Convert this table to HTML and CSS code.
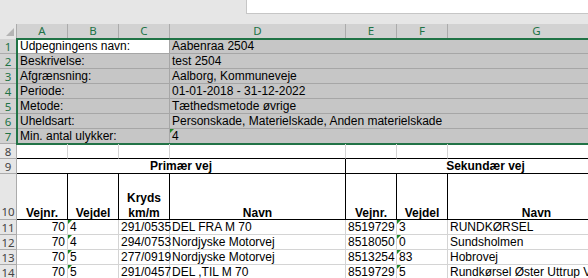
FILE: index.html
```html
<!DOCTYPE html>
<html lang="da">
<head>
<meta charset="utf-8">
<title>Udpegning</title>
<link rel="stylesheet" href="styles.css">
</head>
<body>
<div class="app">
  <div class="topbar">
    <div class="namebox"></div>
    <div class="formula"></div>
  </div>

  <!-- column headers -->
  <div class="grid heads">
    <div class="corner"></div>
    <div class="ch sel">A</div>
    <div class="ch sel">B</div>
    <div class="ch sel">C</div>
    <div class="ch sel">D</div>
    <div class="ch sel">E</div>
    <div class="ch sel">F</div>
    <div class="ch sel">G</div>
  </div>

  <!-- metadata block, currently selected -->
  <div class="grid meta">
    <div class="rh sel">1</div>
    <div class="c lbl active">Udpegningens navn:</div>
    <div class="c val">Aabenraa 2504</div>

    <div class="rh sel">2</div>
    <div class="c lbl">Beskrivelse:</div>
    <div class="c val">test 2504</div>

    <div class="rh sel">3</div>
    <div class="c lbl">Afgrænsning:</div>
    <div class="c val">Aalborg, Kommuneveje</div>

    <div class="rh sel">4</div>
    <div class="c lbl">Periode:</div>
    <div class="c val">01-01-2018 - 31-12-2022</div>

    <div class="rh sel">5</div>
    <div class="c lbl">Metode:</div>
    <div class="c val">Tæthedsmetode øvrige</div>

    <div class="rh sel">6</div>
    <div class="c lbl">Uheldsart:</div>
    <div class="c val">Personskade, Materielskade, Anden materielskade</div>

    <div class="rh sel">7</div>
    <div class="c lbl">Min. antal ulykker:</div>
    <div class="c val flag">4</div>
  </div>

  <!-- result table -->
  <div class="grid table">
    <div class="rh">8</div>
    <div class="c r8"></div><div class="c r8"></div><div class="c r8"></div><div class="c r8"></div>
    <div class="c r8"></div><div class="c r8"></div><div class="c r8"></div>

    <div class="rh">9</div>
    <div class="c grp prim">Primær vej</div>
    <div class="c grp sek">Sekundær vej</div>

    <div class="rh tall">10</div>
    <div class="c hd"><span class="hd-t">Vejnr.</span></div>
    <div class="c hd"><span class="hd-t">Vejdel</span></div>
    <div class="c hd"><span class="hd-t">Kryds<br>km/m</span></div>
    <div class="c hd"><span class="hd-t">Navn</span></div>
    <div class="c hd"><span class="hd-t">Vejnr.</span></div>
    <div class="c hd"><span class="hd-t">Vejdel</span></div>
    <div class="c hd"><span class="hd-t">Navn</span></div>

    <div class="rh">11</div>
    <div class="c num">70</div><div class="c flag">4</div><div class="c">291/0535</div><div class="c">DEL FRA M 70</div>
    <div class="c num">8519729</div><div class="c flag">3</div><div class="c">RUNDKØRSEL</div>

    <div class="rh">12</div>
    <div class="c num">70</div><div class="c flag">4</div><div class="c">294/0753</div><div class="c">Nordjyske Motorvej</div>
    <div class="c num">8518050</div><div class="c flag">0</div><div class="c">Sundsholmen</div>

    <div class="rh">13</div>
    <div class="c num">70</div><div class="c flag">5</div><div class="c">277/0919</div><div class="c">Nordjyske Motorvej</div>
    <div class="c num">8513254</div><div class="c flag">83</div><div class="c">Hobrovej</div>

    <div class="rh">14</div>
    <div class="c num">70</div><div class="c flag">5</div><div class="c">291/0457</div><div class="c">DEL ,TIL M 70</div>
    <div class="c num">8519729</div><div class="c flag">5</div><div class="c">Rundkørsel Øster Uttrup Vej</div>
  </div>
</div>
</body>
</html>
```

FILE: styles.css
```css
html, body {
  margin: 0;
  padding: 0;
  background: #ffffff;
  overflow: hidden;
}

.app {
  width: 640px;
  height: 278px;
  overflow: hidden;
  font-family: "Liberation Sans", Arial, sans-serif;
  font-size: 12px;
  color: #000;
}

/* strip above the grid */
.topbar {
  height: 24px;
  background: #e6e6e6;
  display: flex;
  align-items: flex-start;
}
.namebox {
  width: 246px;
}
.formula {
  flex: 1;
  height: 13px;
  background: #ffffff;
  border-left: 1px solid #c6c6c6;
  border-bottom: 1px solid #c6c6c6;
}

/* worksheet columns: row header, A..G */
.grid {
  display: grid;
  grid-template-columns: 17px 51px 51px 51px 176px 51px 51px 178px;
  grid-auto-rows: 15px;
  background: #ffffff;
}
.heads {
  grid-template-rows: 15px;
}
.meta {
  position: relative;
}
/* selection outline around A1:G7 */
.meta::after {
  content: "";
  position: absolute;
  left: 16px;
  top: -1px;
  right: -4px;
  bottom: -1px;
  border: 2px solid #217346;
  pointer-events: none;
}
.table {
  grid-template-rows: 15px 15px 46px;
}

.corner {
  position: relative;
  background: #e6e6e6;
  border-right: 1px solid #ababab;
}
.corner::after {
  content: "";
  position: absolute;
  right: 2px;
  bottom: 3px;
  border-left: 8px solid transparent;
  border-bottom: 8px solid #b4b4b4;
}

.ch {
  box-sizing: border-box;
  background: #e6e6e6;
  border-right: 1px solid #ababab;
  font-family: "Noto Sans", "Liberation Sans", sans-serif;
  font-size: 11.5px;
  line-height: 14px;
  text-align: center;
  color: #444;
}
.ch.sel {
  background: #d2d2d2;
  color: #217346;
}

.rh {
  box-sizing: border-box;
  background: #e6e6e6;
  border-bottom: 1px solid #ababab;
  border-right: 1px solid #ababab;
  font-family: "Noto Sans", "Liberation Sans", sans-serif;
  font-size: 11.5px;
  line-height: 15px;
  color: #444;
  text-align: center;
}
.rh.sel {
  background: #d2d2d2;
  color: #217346;
}
.rh.tall {
  display: flex;
  align-items: flex-end;
  justify-content: center;
}

/* cells */
.c {
  position: relative;
  box-sizing: border-box;
  border-right: 1px solid #d4d4d4;
  border-bottom: 1px solid #d4d4d4;
  padding: 0 2px;
  line-height: 14px;
  white-space: nowrap;
}
.c.num {
  text-align: right;
}

.c.lbl {
  grid-column: 2 / 5;
  background: #c6c6c6;
  border-color: #a6a6a6;
  padding-left: 3px;
}
.c.lbl.active {
  background: #ffffff;
}
.c.val {
  grid-column: 5 / 9;
  background: #c6c6c6;
  border-bottom-color: #a6a6a6;
  border-right: none;
}

.c.r8 {
  border-bottom-color: #000;
}

.c.grp {
  font-weight: 700;
  text-align: center;
  line-height: 15px;
  border-bottom-color: #000;
  border-right-color: #000;
}
.c.prim {
  grid-column: 2 / 6;
}
.c.sek {
  grid-column: 6 / 9;
}

.c.hd {
  display: flex;
  flex-direction: column;
  justify-content: flex-end;
  align-items: center;
  text-align: center;
  font-weight: 700;
  line-height: 15px;
  border-right-color: #000;
  border-bottom-color: #000;
}
.hd-t {
  margin-bottom: -2px;
}

/* "number stored as text" marker */
.c.flag::before {
  content: "";
  position: absolute;
  left: 0;
  top: 0;
  border-top: 4px solid #1e8a28;
  border-right: 4px solid transparent;
}
```
